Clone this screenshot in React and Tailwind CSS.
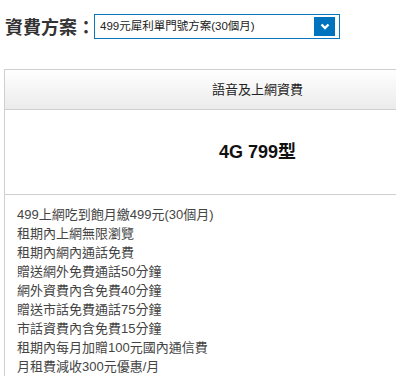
const features = [
  "499上網吃到飽月繳499元(30個月)",
  "租期內上網無限瀏覽",
  "租期內網內通話免費",
  "贈送網外免費通話50分鐘",
  "網外資費內含免費40分鐘",
  "贈送市話免費通話75分鐘",
  "市話資費內含免費15分鐘",
  "租期內每月加贈100元國內通信費",
  "月租費減收300元優惠/月",
];

function PlanSelect() {
  return (
    <div className="flex items-center h-[25px] w-[246px] border border-[#0875bd] bg-white pl-[5px] pr-[4px]">
      <span className="flex-1 text-[11.5px] text-[#222] leading-none">
        499元犀利單門號方案(30個月)
      </span>
      <span className="flex items-center justify-center w-[21px] h-[19px] bg-[#0073bf]">
        <svg width="10" height="7" viewBox="0 0 10 7">
          <path d="M1.5 1.5 L5 5 L8.5 1.5" fill="none" stroke="#fff" strokeWidth="2.4" />
        </svg>
      </span>
    </div>
  );
}

export default function App() {
  return (
    <div
      className="w-[396px] h-[382px] overflow-hidden bg-white text-[#333]"
      style={{ fontFamily: '"Liberation Sans", "Noto Sans CJK TC", sans-serif' }}
    >
      <div className="flex items-center pt-[14px] pl-[5px]">
        <span className="w-[89px] text-[18px] font-bold leading-none text-[#333] mt-[3px] whitespace-nowrap">資費方案：</span>
        <PlanSelect />
      </div>

      <div className="mt-[30px] ml-[4px] w-[506px] border-l border-t border-[#cfcfcf]">
        <div className="h-[40px] flex items-center justify-center border-b border-[#cfcfcf] bg-gradient-to-b from-white to-[#ebebeb]">
          <span className="text-[13px] text-[#222]">語音及上網資費</span>
        </div>
        <div className="h-[85px] flex items-center justify-center border-b border-[#cfcfcf]">
          <span className="text-[18px] font-bold text-[#111]">4G 799型</span>
        </div>
        <div className="pt-[10px] pl-[12px] text-[13px] leading-[19px] text-[#444]">
          {features.map((f) => (
            <div key={f}>{f}</div>
          ))}
        </div>
      </div>
    </div>
  );
}
